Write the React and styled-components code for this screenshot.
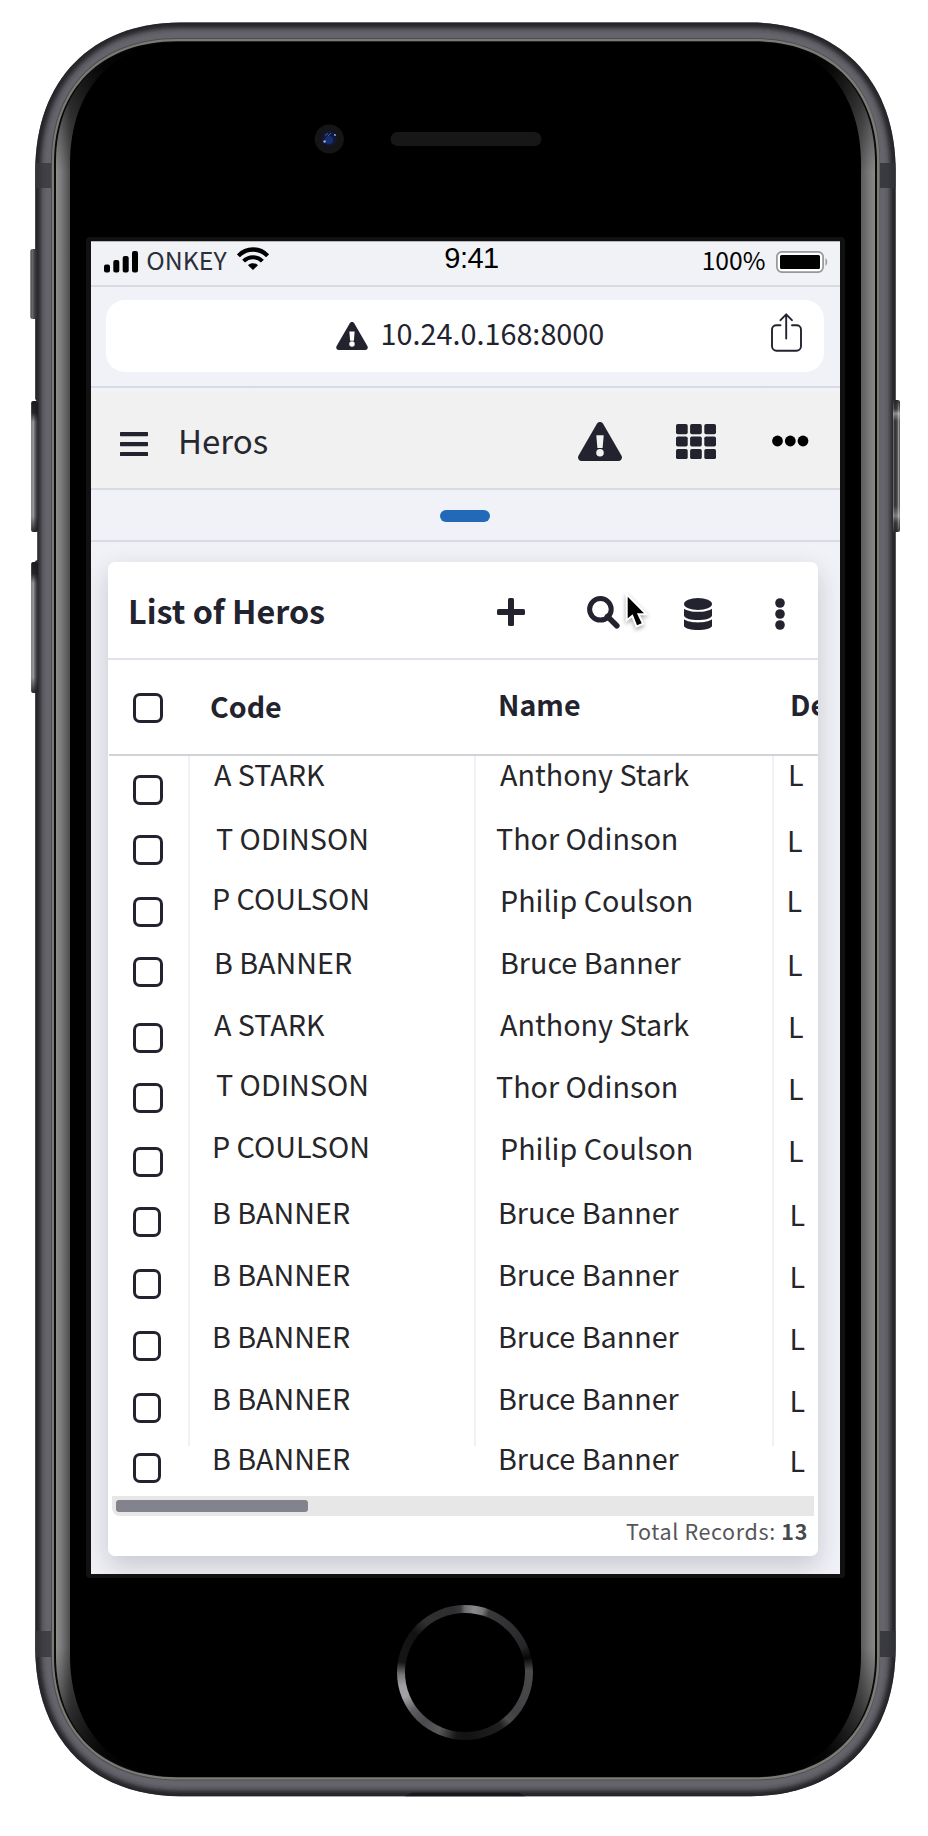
import React from 'react';
import styled, { createGlobalStyle } from 'styled-components';

const INK = '#22232e';
const LINE = '#d9dbe3';

const GlobalStyle = createGlobalStyle`
  * { box-sizing: border-box; }
  body {
    margin: 0;
    background: #fff;
    font-family: "Noto Sans CJK SC", "Noto Sans", sans-serif;
    color: ${INK};
  }
  svg { display: block; flex: none; }
`;

/* ---------- device ---------- */

const Phone = styled.div`
  position: relative;
  width: 928px;
  height: 1836px;
  padding: 0 83px 0 86px;
  display: flex;
  flex-direction: column;
  overflow: hidden;
`;

const DeviceArt = styled.svg`
  position: absolute;
  inset: 0;
`;

const TopBezel = styled.div`
  height: 237px;
  flex: none;
`;

const Bezel = styled.div`
  position: relative;
  flex: none;
  width: 759px;
  height: 1341px;
  padding: 4px 5px 4px;
  border-radius: 4px;
  background: #111;
`;

const Screen = styled.main`
  width: 749px;
  height: 1333px;
  overflow: hidden;
  display: flex;
  flex-direction: column;
  background: #f1f2f7;
`;

const BottomBezel = styled.div`
  position: relative;
  flex: 1;
  display: flex;
  justify-content: center;
  align-items: flex-start;
  padding: 27px 1px 0 0;
`;

const HomeButton = styled.div`
  width: 136px;
  height: 135px;
  padding: 8px;
  border-radius: 50%;
  background: conic-gradient(
    #6c6c6e 0deg, #8a8a8c 8deg, #77777a 16deg, #39393b 22deg, #2e2e30 50deg, #262628 66deg,
    #070707 77deg, #4a4a4d 88deg, #47474a 110deg, #414144 128deg, #4a4a4c 138deg, #202021 146deg,
    #121212 180deg, #171718 188deg, #59595c 204deg, #4a4a4e 220deg, #5e5e62 234deg, #a2a2a6 248deg,
    #a0a0a4 258deg, #77777a 268deg, #161617 279deg, #121213 308deg, #303032 322deg, #2e2e30 350deg, #3a3a3c 356deg, #6c6c6e 360deg
  );
  &::after {
    content: "";
    display: block;
    height: 100%;
    border-radius: 50%;
    background: #000;
  }
`;

/* ---------- browser chrome ---------- */

const StatusBar = styled.header`
  flex: none;
  height: 46px;
  padding: 0 12px 10px 13px;
  border-top: 1px solid #b5b6ba;
  border-bottom: 2px solid ${LINE};
  display: grid;
  grid-template-columns: 1fr auto 1fr;
  align-items: center;
  background: #f1f2f6;
`;

const StatusGroup = styled.div`
  display: flex;
  align-items: center;
  justify-content: ${(p) => (p.$end ? 'flex-end' : 'flex-start')};
`;

const Carrier = styled.span`
  margin: 0 10.5px 0 8.3px;
  font-size: 24.9px;
  line-height: 30px;
  color: #2b2e3a;
`;

const Clock = styled.span`
  margin: 0 0 2px 11px;
  font: 29px/32px "Liberation Sans", Arial, sans-serif;
  letter-spacing: -0.5px;
  color: #000;
`;

const Charge = styled.span`
  margin: -1px 10.5px 0 0;
  font-size: 24.7px;
  line-height: 30px;
  color: #000;
`;

const AddressBar = styled.div`
  flex: none;
  height: 101px;
  padding: 13px 16px 14px 15px;
  border-bottom: 2px solid ${LINE};
`;

const AddressPill = styled.div`
  height: 72px;
  border-radius: 19px;
  background: #fff;
  display: flex;
  align-items: center;
  padding: 0 22px 0 230px;
`;

const Url = styled.span`
  flex: 1;
  margin-left: 12.5px;
  font-size: 28.8px;
  line-height: 36px;
  padding-bottom: 6px;
`;

const NavBar = styled.nav`
  flex: none;
  height: 102px;
  padding: 4px 31px 0 29px;
  border-bottom: 2px solid ${LINE};
  background: linear-gradient(#f1f3f8, #f1f1f1 5px);
  display: flex;
  align-items: center;
`;

const NavTitle = styled.h1`
  flex: 1;
  margin: 0 0 0 30px;
  font-size: 33px;
  font-weight: 400;
  line-height: 44px;
  padding-bottom: 1px;
  color: #26272f;
`;

const NavIcons = styled.div`
  display: flex;
  align-items: center;
  padding-top: 2px;
`;

const TabStrip = styled.div`
  flex: none;
  height: 52px;
  border-bottom: 2px solid ${LINE};
  display: flex;
  align-items: center;
  justify-content: center;
`;

const TabPill = styled.span`
  width: 50px;
  height: 12px;
  margin: 2px 1px 0 0;
  border-radius: 6px;
  background: #2269b9;
`;

/* ---------- list card ---------- */

const Card = styled.section`
  flex: none;
  width: 710px;
  height: 994px;
  margin: 20px 0 0 17px;
  border-radius: 7px;
  background: #fff;
  box-shadow: 0 10px 26px rgba(30, 32, 48, 0.2);
  display: flex;
  flex-direction: column;
`;

const CardToolbar = styled.div`
  height: 98px;
  flex: none;
  padding-left: 20px;
  border-bottom: 2px solid #e2e3ea;
  display: flex;
  align-items: center;
`;

const CardTitle = styled.h2`
  width: 369px;
  margin: 0;
  font-size: 32.3px;
  font-weight: 700;
  line-height: 44px;
`;

const Tools = styled.div`
  display: flex;
  align-items: center;
  height: 96px;
`;

const Tool = styled.span`
  margin-left: ${(p) => p.$gap}px;
  padding-top: ${(p) => p.$drop || 0}px;
`;

const HeadRow = styled.div`
  flex: none;
  height: 96px;
  margin-left: 1px;
  border-bottom: 2px solid #d2d3d6;
  display: grid;
  grid-template-columns: 81px 286px 298px 1fr;
  align-items: start;
  overflow: hidden;
`;

const HeadCell = styled.div`
  padding: ${(p) => p.$top}px 0 0 ${(p) => p.$left}px;
  font-size: 28.6px;
  font-weight: 700;
  line-height: 35px;
  white-space: nowrap;
`;

const Body = styled.div`
  flex: none;
  height: 740px;
  background:
    linear-gradient(#f0f1f5, #f0f1f5) 80px 0 / 2px 690px no-repeat,
    linear-gradient(#f0f1f5, #f0f1f5) 366px 0 / 2px 690px no-repeat,
    linear-gradient(#f0f1f5, #f0f1f5) 664px 0 / 2px 690px no-repeat;
`;

const Row = styled.div`
  height: ${(p) => p.$height}px;
  padding-left: 2px;
  display: grid;
  grid-template-columns: 80px 286px 298px 1fr;
  align-items: start;
`;

const Cell = styled.div`
  padding: ${(p) => p.$drop}px 0 0 ${(p) => p.$left}px;
  font-size: 28.7px;
  line-height: 35px;
  white-space: nowrap;
  color: #26262a;
`;

const CheckBox = styled.span`
  display: block;
  width: ${(p) => p.$width}px;
  height: 30px;
  margin: ${(p) => p.$top}px 0 0 ${(p) => p.$left}px;
  border: 3px solid ${INK};
  border-radius: 7px;
`;

const ScrollTrack = styled.div`
  flex: none;
  height: 20px;
  margin: 0 4px;
  padding: 4px;
  border-radius: 0 0 0 8px;
  background: #e7e7e7;
`;

const ScrollThumb = styled.div`
  width: 192px;
  height: 12px;
  border-radius: 3px;
  background: #83838d;
`;

const Footer = styled.footer`
  padding: 0 10px 0 0;
  text-align: right;
  font-size: 21.5px;
  line-height: 30px;
  letter-spacing: 0.65px;
  color: #55565a;
  b { color: #48494d; }
`;

/* ---------- drawings ---------- */

const boxPath = (l, t, r, b, rx, ry, k = 0.61) => {
  const x = rx * (1 - k);
  const y = ry * (1 - k);
  return `M${l} ${t + ry}C${l} ${t + y} ${l + x} ${t} ${l + rx} ${t}H${r - rx}C${r - x} ${t} ${r} ${t + y} ${r} ${t + ry}V${b - ry}C${r} ${b - y} ${r - x} ${b} ${r - rx} ${b}H${l + rx}C${l + x} ${b} ${l} ${b - y} ${l} ${b - ry}Z`;
};

const outer = boxPath(35.3, 22.6, 895.6, 1796.2, 145, 148);

function Device() {
  return (
    <DeviceArt width="928" height="1836" viewBox="0 0 928 1836" aria-hidden="true">
      <defs>
        <clipPath id="shell"><path d={outer} /></clipPath>
        <filter id="soft" x="-5%" y="-5%" width="110%" height="110%"><feGaussianBlur stdDeviation="2.8" /></filter>
        <linearGradient id="rim" x1="56" x2="875" y1="0" y2="0" gradientUnits="userSpaceOnUse">
          <stop offset="0" stopColor="#8e8e8e" />
          <stop offset="0.006" stopColor="#7c7c7c" />
          <stop offset="0.018" stopColor="#4a4a4a" />
          <stop offset="0.06" stopColor="#111" />
          <stop offset="0.94" stopColor="#111" />
          <stop offset="0.983" stopColor="#5c5c5c" />
          <stop offset="0.994" stopColor="#7c7c7c" />
          <stop offset="1" stopColor="#888" />
        </linearGradient>
        <linearGradient id="fade" x1="0" x2="0" y1="42" y2="1777" gradientUnits="userSpaceOnUse">
          <stop offset="0" stopColor="#000" />
          <stop offset="0.02" stopColor="#000" stopOpacity="0.6" />
          <stop offset="0.075" stopColor="#000" stopOpacity="0" />
          <stop offset="0.925" stopColor="#000" stopOpacity="0" />
          <stop offset="0.98" stopColor="#000" stopOpacity="0.6" />
          <stop offset="1" stopColor="#000" />
        </linearGradient>
        <linearGradient id="key" x1="0" x2="1" y1="0" y2="0">
          <stop offset="0" stopColor="#47474a" />
          <stop offset="0.25" stopColor="#a8a8ab" />
          <stop offset="0.45" stopColor="#77777b" />
          <stop offset="0.7" stopColor="#4a494e" />
          <stop offset="1" stopColor="#2e2d31" />
        </linearGradient>
        <linearGradient id="keyEnds" x1="0" x2="0" y1="0" y2="1">
          <stop offset="0" stopColor="#1c1c20" />
          <stop offset="0.09" stopColor="#1c1c20" stopOpacity="0.9" />
          <stop offset="0.16" stopColor="#1c1c20" stopOpacity="0" />
          <stop offset="0.88" stopColor="#1c1c20" stopOpacity="0" />
          <stop offset="1" stopColor="#1c1c20" stopOpacity="0.9" />
        </linearGradient>
        <linearGradient id="power" x1="0" x2="1" y1="0" y2="0">
          <stop offset="0" stopColor="#808080" />
          <stop offset="0.25" stopColor="#2e2e31" />
          <stop offset="0.6" stopColor="#48484b" />
          <stop offset="0.8" stopColor="#9a9a9c" />
          <stop offset="1" stopColor="#4a4a4d" />
        </linearGradient>
        <linearGradient id="powerGlint" x1="0" x2="0" y1="0" y2="1">
          <stop offset="0" stopColor="#222" stopOpacity="0.8" />
          <stop offset="0.06" stopColor="#222" stopOpacity="0.2" />
          <stop offset="0.1" stopColor="#ddd" stopOpacity="0.5" />
          <stop offset="0.16" stopColor="#ddd" stopOpacity="0" />
          <stop offset="0.8" stopColor="#ddd" stopOpacity="0" />
          <stop offset="0.88" stopColor="#ddd" stopOpacity="0.4" />
          <stop offset="0.94" stopColor="#222" stopOpacity="0.2" />
          <stop offset="1" stopColor="#222" stopOpacity="0.7" />
        </linearGradient>
      </defs>

      <path d={outer} fill="#65646b" />
      <g clipPath="url(#shell)">
        <path d={outer} fill="none" stroke="#222125" strokeWidth="11" filter="url(#soft)" />
        <rect x="35" y="163" width="17" height="25" fill="#38373c" opacity="0.8" />
        <rect x="35" y="1631" width="17" height="26" fill="#38373c" opacity="0.8" />
        <rect x="879" y="163" width="17" height="25" fill="#33323a" opacity="0.85" />
        <rect x="879" y="1631" width="17" height="26" fill="#33323a" opacity="0.85" />
        <path d="M404 1797l8-4.200h107l7 4.200z" fill="#19191b" />
      </g>
      <path d={boxPath(51, 38, 880, 1780.5, 126, 124)} fill="#4d4c50" />
      <path d={boxPath(52, 39, 879.5, 1779.5, 125, 123)} fill="#7b7b75" />
      <path d={boxPath(54, 41.3, 877, 1777.3, 123, 121)} fill="#0a0a0a" />
      <path d={boxPath(56, 42, 875, 1776.5, 121, 120)} fill="url(#rim)" />
      <path d={boxPath(56, 42, 875, 1776.5, 121, 120)} fill="url(#fade)" />
      <path d={boxPath(70, 42, 861, 1777, 112, 122)} fill="#000" />

      <rect x="30.5" y="249" width="6.5" height="70" rx="2" fill="url(#key)" />
      <rect x="30.5" y="249" width="6.5" height="70" rx="2" fill="#2b2b2f" opacity="0.45" />
      <path d="M34.4 398L37.2 402V560L34.4 561.5z" fill="#fff" />
      {[401, 562].map((y) => (
        <g key={y}>
          <rect x="31.3" y={y} width="6.7" height="131" rx="2" fill="url(#key)" />
          <rect x="31.3" y={y} width="6.7" height="131" rx="2" fill="url(#keyEnds)" />
        </g>
      ))}
      <rect x="893" y="400" width="7" height="132" rx="2.5" fill="url(#power)" />
      <rect x="893" y="400" width="7" height="132" rx="2.5" fill="url(#powerGlint)" />

      <circle cx="329.3" cy="139" r="14.6" fill="#151515" />
      <circle cx="329.3" cy="138.3" r="7.6" fill="#10193c" />
      <circle cx="329" cy="140" r="4" fill="#182f6e" />
      <circle cx="324.6" cy="141.5" r="1.3" fill="#8fa9ea" />
      <circle cx="335" cy="135" r="1.1" fill="#7f9be0" />
      <path d="M325 135.5l3-2M328 136l3-3" stroke="#5068aa" strokeWidth="0.9" />
      <rect x="390.5" y="132" width="151" height="14" rx="7" fill="#171717" />
    </DeviceArt>
  );
}

const SignalArt = styled.svg`
  margin-top: 5px;
`;

const Signal = () => (
  <SignalArt width="34" height="22" viewBox="0 0 34 22">
    <rect x="0" y="13.5" width="6" height="8" rx="2" />
    <rect x="9.3" y="9" width="6" height="12.5" rx="2" />
    <rect x="18.7" y="5" width="6" height="16.5" rx="2" />
    <rect x="28" y="0" width="6" height="21.5" rx="2" />
  </SignalArt>
);

const Wifi = () => (
  <svg width="32" height="24" viewBox="0 0 32 24" fill="none" stroke="#000">
    <path d="M1.4 8.8C9.5 .4 22.5 .4 30.6 8.8" strokeWidth="4.3" />
    <path d="M6.6 14.2C11.8 8.9 20.2 8.9 25.4 14.2" strokeWidth="4" />
    <path d="M16 23L11 18.2C13.8 15.6 18.2 15.6 21 18.2Z" fill="#000" stroke="none" />
  </svg>
);

const Battery = () => (
  <SignalArt width="52" height="22" viewBox="0 0 52 22">
    <rect x="0.9" y="0.9" width="46.2" height="20.2" rx="5" fill="#fff" stroke="#97979b" strokeWidth="1.7" />
    <rect x="4" y="4" width="40" height="14" rx="1.5" />
    <path d="M49.5 7c2.2 1.5 2.2 6.500 0 8z" fill="#97979b" />
  </SignalArt>
);

const Warning = ({ width, height, mark }) => (
  <svg width={width} height={height} viewBox="0 0 44 39">
    <path d="M18.900 1.800C20.300-.5 23.700-.5 25.100 1.800L43.400 33.500C44.900 36 43.300 39 40.400 39H3.600C.7 39-.9 36 .6 33.500Z" fill={INK} />
    <path d="M18.300 13.300H25.700L24.600 26H19.400Z" fill={mark} />
    <circle cx="22" cy="30.700" r="3.800" fill={mark} />
  </svg>
);

const ShareArt = styled.svg`
  margin-top: -8px;
`;

const Share = () => (
  <ShareArt width="31" height="39" viewBox="0 0 31 39" fill="none" stroke={INK} strokeWidth="1.9" strokeLinecap="round" strokeLinejoin="round">
    <path d="M9.500 12.200H5.500C3 12.200 1 14 1 16.500V33.300C1 35.800 3 37.700 5.500 37.700H25.500C28 37.700 30 35.800 30 33.300V16.500C30 14 28 12.200 25.500 12.200H21" />
    <path d="M15.200 25.500V1.500M9.500 7.200L15.200 1.300 20.900 7.200" />
  </ShareArt>
);

const MenuArt = styled.svg`
  margin-top: 8px;
`;

const Menu = () => (
  <MenuArt width="28" height="24" viewBox="0 0 28 24" fill={INK}>
    <rect width="28" height="4.200" rx=".6" />
    <rect y="10" width="28" height="4.200" rx=".6" />
    <rect y="20" width="28" height="4" rx=".6" />
  </MenuArt>
);

const Grid = () => (
  <svg width="40" height="35" viewBox="0 0 40 35" fill={INK}>
    {[0, 12.4, 24.9].map((y) => [0, 14.100, 28.300].map((x) => <rect key={`${x}-${y}`} x={x} y={y} width="11.700" height="10.200" rx="1.800" />))}
  </svg>
);

const More = () => (
  <svg width="37" height="12" viewBox="0 0 37 12">
    <circle cx="5.500" cy="6" r="5.400" />
    <circle cx="18.300" cy="6" r="5.400" />
    <circle cx="31" cy="6" r="5.400" />
  </svg>
);

const Plus = () => (
  <svg width="28" height="28" viewBox="0 0 28 28" fill={INK}>
    <rect x="11" width="6" height="28" rx="1.500" />
    <rect y="11" width="28" height="6" rx="1.500" />
  </svg>
);

const Search = () => (
  <svg width="33" height="33" viewBox="0 0 33 33" fill="none" stroke={INK} strokeWidth="5">
    <circle cx="13.400" cy="13.300" r="10.800" />
    <path d="M20.500 20.500L29.800 29.800" strokeWidth="5.600" strokeLinecap="round" />
  </svg>
);

const Database = () => (
  <svg width="28" height="32" viewBox="0 0 28 32" fill={INK}>
    <ellipse cx="14" cy="6" rx="14" ry="5.900" />
    <path d="M0 10.700C5 14.800 23 14.800 28 10.700V17.500C27 23.600 1 23.600 0 17.500Z" />
    <path d="M0 21.300C5 25.400 23 25.400 28 21.300V28C26 33.300 2 33.300 0 28Z" />
  </svg>
);

const Kebab = () => (
  <svg width="10" height="32" viewBox="0 0 10 32" fill={INK}>
    <circle cx="5" cy="5" r="4.800" />
    <circle cx="5" cy="16" r="4.800" />
    <circle cx="5" cy="27" r="4.800" />
  </svg>
);

const Pointer = styled.svg`
  position: absolute;
  left: 536px;
  top: 355px;
  filter: drop-shadow(0 2px 2px rgba(0, 0, 0, 0.35));
`;

const Cursor = () => (
  <Pointer width="32" height="38" viewBox="0 0 32 38">
    <path
      d="M5.700 4.700V26.300L10.700 22.300L15 33.300L19.700 31.300L14.900 21.300H22Z"
      fill="#000"
      stroke="#fff"
      strokeWidth="4"
      paintOrder="stroke"
    />
  </Pointer>
);

/* ---------- data ---------- */

const rows = [
  { h: 64, check: 19, code: ['A STARK', 24], name: ['Anthony Stark', 24, 0], loc: [14, 0] },
  { h: 60, check: 15, code: ['T ODINSON', 26], name: ['Thor Odinson', 20, 0], loc: [13, 2] },
  { h: 64, check: 17, code: ['P COULSON', 22], name: ['Philip Coulson', 24, 2], loc: [12.5, 2] },
  { h: 62, check: 13, code: ['B BANNER', 24], name: ['Bruce Banner', 24, 0], loc: [13, 2] },
  { h: 60, check: 17, code: ['A STARK', 24], name: ['Anthony Stark', 24, 0], loc: [14, 2] },
  { h: 62, check: 17, code: ['T ODINSON', 26], name: ['Thor Odinson', 20, 2], loc: [14, 4] },
  { h: 66, check: 19, code: ['P COULSON', 22], name: ['Philip Coulson', 24, 2], loc: [14, 4] },
  ...[62, 62, 62, 60, 56].map((h) => ({
    h, check: 13, narrow: true, code: ['B BANNER', 22], name: ['Bruce Banner', 22, 0], loc: [15.5, 2],
  })),
];

export default function App() {
  return (
    <>
      <GlobalStyle />
      <Phone>
        <Device />
        <TopBezel />
        <Bezel>
          <Screen>
            <StatusBar>
              <StatusGroup>
                <Signal />
                <Carrier>ONKEY</Carrier>
                <Wifi />
              </StatusGroup>
              <Clock>9:41</Clock>
              <StatusGroup $end>
                <Charge>100%</Charge>
                <Battery />
              </StatusGroup>
            </StatusBar>
            <AddressBar>
              <AddressPill>
                <Warning width={32} height={28} mark="#fff" />
                <Url>10.24.0.168:8000</Url>
                <Share />
              </AddressPill>
            </AddressBar>
            <NavBar>
              <Menu />
              <NavTitle>Heros</NavTitle>
              <NavIcons>
                <Warning width={44} height={39} mark="#f1f1f1" />
                <Tool $gap={54}><Grid /></Tool>
                <Tool $gap={56}><More /></Tool>
              </NavIcons>
            </NavBar>
            <TabStrip><TabPill /></TabStrip>
            <Card>
              <CardToolbar>
                <CardTitle>List of Heros</CardTitle>
                <Tools>
                  <Tool $gap={0} $drop={4}><Plus /></Tool>
                  <Tool $gap={62} $drop={5}><Search /></Tool>
                  <Tool $gap={64} $drop={8}><Database /></Tool>
                  <Tool $gap={63} $drop={8}><Kebab /></Tool>
                </Tools>
              </CardToolbar>
              <HeadRow>
                <CheckBox $width={30} $top={33} $left={24} />
                <HeadCell $top={28} $left={20}>Code</HeadCell>
                <HeadCell $top={26} $left={22}>Name</HeadCell>
                <HeadCell $top={26} $left={16}>De</HeadCell>
              </HeadRow>
              <Body>
                {rows.map((r, i) => (
                  <Row key={i} $height={r.h}>
                    <CheckBox $width={r.narrow ? 28 : 30} $top={r.check} $left={23} />
                    <Cell $left={r.code[1]} $drop={0}>{r.code[0]}</Cell>
                    <Cell $left={r.name[1]} $drop={r.name[2]}>{r.name[0]}</Cell>
                    <Cell $left={r.loc[0]} $drop={r.loc[1]}>L</Cell>
                  </Row>
                ))}
              </Body>
              <ScrollTrack><ScrollThumb /></ScrollTrack>
              <Footer>Total Records: <b>13</b></Footer>
            </Card>
          </Screen>
          <Cursor />
        </Bezel>
        <BottomBezel><HomeButton /></BottomBezel>
      </Phone>
    </>
  );
}
